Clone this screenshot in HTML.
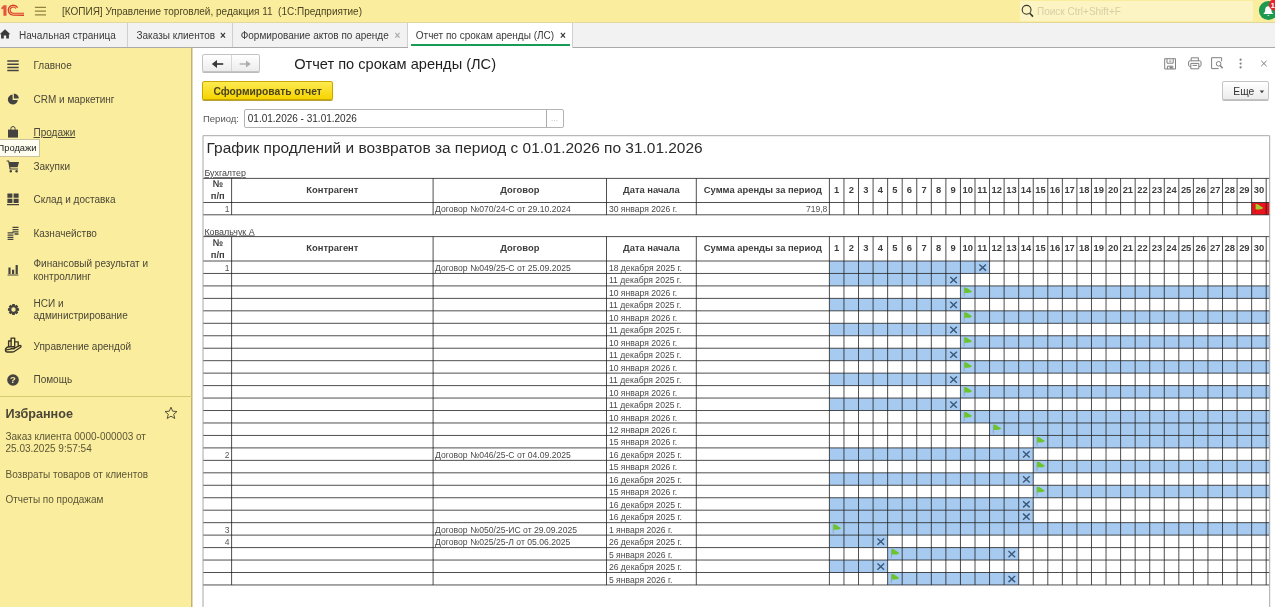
<!DOCTYPE html><html lang="ru"><head><meta charset="utf-8"><title>Отчет по срокам аренды (ЛС)</title>
<style>
html,body{margin:0;padding:0;}
body{width:1275px;height:607px;overflow:hidden;position:relative;background:#fff;font-family:"Liberation Sans",Arial,sans-serif;font-size:10px;color:#3c3c3c;}
.abs{position:absolute;white-space:nowrap;}
#topbar{left:0;top:0;width:1275px;height:23px;background:rgba(251,237,158,0.998);border-bottom:1px solid #e3d79c;box-sizing:border-box;}
#tabbar{left:0;top:23px;width:1275px;height:24px;background:rgba(242,242,242,0.998);border-bottom:1px solid #a9a9a9;box-sizing:content-box;}
#side{left:0;top:48px;width:191px;height:559px;background:rgba(251,237,158,0.998);box-sizing:border-box;}
.tab{top:23px;height:24px;line-height:25px;font-size:10px;color:#333;border-right:1px solid #cfcfcf;box-sizing:border-box;}
.mi{left:33.5px;font-size:10px;line-height:12.5px;color:#4a4737;white-space:normal;}
.fav{left:5.5px;font-size:10px;line-height:12px;color:#5b5636;}
.btn{box-sizing:border-box;border-radius:2px;}
svg{position:absolute;overflow:visible;}
svg text{font-family:"Liberation Sans",Arial,sans-serif;}
#w{position:absolute;left:0;top:0;width:1275px;height:607px;will-change:transform;}
</style></head><body><div id="w">
<div id="topbar" class="abs"></div>
<svg style="left:0;top:0" width="30" height="22" viewBox="0 0 30 22">
<path d="M1.1 7.9L3.6 5.3H6.5V15.8H3.4V8.6L1.9 9.6Z" fill="#e4553d"/>
<g fill="none" stroke="#dc3f27">
<path d="M17.6 7.7A5 5 0 1 0 13.2 15.2L24 15.2" stroke-width="1.35"/>
<path d="M15.9 8.6A3.1 3.1 0 1 0 13.2 13.2L24 13.2" stroke-width="1.05"/>
</g></svg>
<svg style="left:34px;top:4px" width="14" height="14" viewBox="0 0 14 14"><g stroke="#90833e" stroke-width="1.35"><path d="M0.9 3.35H12M0.9 7.05H12M0.9 10.8H12"/></g></svg>
<div class="abs" style="left:62px;top:4.5px;font-size:10px;line-height:13px;color:#4b4523;white-space:pre">[КОПИЯ] Управление торговлей, редакция 11  (1С:Предприятие)</div>
<div class="abs" style="left:1020px;top:1px;width:233px;height:20px;background:rgba(253,244,196,0.998);"></div>
<svg style="left:1020px;top:3px" width="16" height="16" viewBox="0 0 16 16"><circle cx="6.6" cy="6.8" r="4.4" fill="none" stroke="#3a3a2a" stroke-width="1.1"/><path d="M9.8 10.2L13 13.6" stroke="#3a3a2a" stroke-width="1.6"/></svg>
<div class="abs" style="left:1037px;top:4.5px;font-size:10px;line-height:13px;color:#d6cfa6;">Поиск Ctrl+Shift+F</div>
<svg style="left:1255px;top:0" width="20" height="22" viewBox="0 0 20 22"><circle cx="13.4" cy="10.45" r="9.5" fill="#1e9a50"/>
<path d="M13.3 6.2c-2.2 0-3.1 1.7-3.1 3.6 0 2.1-.8 3.1-2 4.2h10.2c-1.2-1.1-2-2.1-2-4.2 0-1.9-.9-3.6-3.1-3.6z M12.1 14.9a1.3 1.3 0 0 0 2.4 0z" fill="#fff"/>
<circle cx="19.6" cy="4.8" r="5.7" fill="#e6232b"/><text x="15.6" y="8" font-size="8" font-weight="bold" fill="#fff">1</text></svg>
<div id="tabbar" class="abs"></div>
<div class="abs tab" style="left:0;width:128px;"></div>
<div class="abs tab" style="left:128px;width:105px;"></div>
<div class="abs tab" style="left:233px;width:175px;"></div>
<div class="abs tab" style="left:408px;width:165px;background:rgba(255,255,255,0.998);height:25px;"></div>
<div class="abs" style="left:410.5px;top:43.6px;width:159px;height:2px;background:rgba(25,155,84,0.998);"></div>
<svg style="left:0;top:28px" width="12" height="12" viewBox="0 0 12 12"><path d="M-0.3 6.2L5 1.2L10.3 6.2H8.9V10.6H6.2V7.6H3.8V10.6H1.1V6.2Z" fill="#3a3a3a"/></svg>
<div class="abs" style="left:19px;top:28.8px;font-size:10px;line-height:13px;color:#3a3a3a;">Начальная страница</div>
<div class="abs" style="left:136.5px;top:28.8px;font-size:10px;line-height:13px;color:#3a3a3a;">Заказы клиентов</div>
<div class="abs" style="left:220px;top:28.6px;font-size:10px;line-height:13px;font-weight:bold;color:#333;">×</div>
<div class="abs" style="left:240.7px;top:28.8px;font-size:10px;line-height:13px;color:#3a3a3a;">Формирование актов по аренде</div>
<div class="abs" style="left:394.6px;top:28.6px;font-size:10px;line-height:13px;font-weight:bold;color:#aaa;">×</div>
<div class="abs" style="left:415.8px;top:28.8px;font-size:10px;line-height:13px;color:#3a3a3a;">Отчет по срокам аренды (ЛС)</div>
<div class="abs" style="left:560px;top:28.6px;font-size:10px;line-height:13px;font-weight:bold;color:#333;">×</div>
<div id="side" class="abs"></div>
<div class="abs" style="left:191px;top:47px;width:1px;height:560px;background:rgba(190,178,116,0.998);"></div>
<div class="abs" style="left:192px;top:48px;width:1px;height:559px;background:rgba(226,219,178,0.998);"></div>
<div class="abs mi" style="top:60.4px;width:150px;">Главное</div>
<div class="abs mi" style="top:94.0px;width:150px;">CRM и маркетинг</div>
<div class="abs mi" style="top:127.3px;width:150px;"><span style="text-decoration:underline">Продажи</span></div>
<div class="abs mi" style="top:160.8px;width:150px;">Закупки</div>
<div class="abs mi" style="top:194.3px;width:150px;">Склад и доставка</div>
<div class="abs mi" style="top:227.8px;width:150px;">Казначейство</div>
<div class="abs mi" style="top:258.4px;width:150px;">Финансовый результат и<br>контроллинг</div>
<div class="abs mi" style="top:297.9px;width:150px;">НСИ и<br>администрирование</div>
<div class="abs mi" style="top:341.1px;width:150px;">Управление арендой</div>
<div class="abs mi" style="top:374.4px;width:150px;">Помощь</div>
<svg style="left:7px;top:60px" width="12" height="12" viewBox="0 0 12 12"><path d="M0.3 1H11.7M0.3 4.2H11.7M0.3 7.4H11.7M0.3 10.6H11.7" stroke="#45433f" stroke-width="1.5"/></svg>
<svg style="left:7px;top:93px" width="13" height="13" viewBox="0 0 13 13"><path d="M5.6 1.6A5 5 0 1 0 10.8 7H5.6Z" fill="#45433f"/><path d="M6.9 0.6A5 5 0 0 1 11.8 5.6H6.9Z" fill="#45433f"/></svg>
<svg style="left:7px;top:125px" width="13" height="14" viewBox="0 0 13 14"><path d="M1 4.6H11V12.6H1Z" fill="#45433f"/><path d="M3.9 5V3.6A2.1 2.1 0 0 1 8.1 3.6V5" fill="none" stroke="#45433f" stroke-width="1"/></svg>
<svg style="left:6px;top:159px" width="14" height="14" viewBox="0 0 14 14"><path d="M0.6 1.4H3L3.6 3H13L11.6 8.2H4.2L4.6 9.6H12V10.6H3.6L2.2 2.6H0.6Z" fill="#45433f"/><circle cx="4.8" cy="12.2" r="1.2" fill="#45433f"/><circle cx="10.6" cy="12.2" r="1.2" fill="#45433f"/></svg>
<svg style="left:7px;top:193px" width="12" height="13" viewBox="0 0 12 13"><path d="M0.4 0.6H5.4V4.8H0.4ZM6.6 0.6H11.6V4.8H6.6ZM0.4 5.8H5.4V10H0.4ZM6.6 5.8H11.6V10H6.6ZM0 11H12V12.2H0Z" fill="#45433f"/></svg>
<svg style="left:7px;top:226px" width="13" height="14" viewBox="0 0 13 14"><g stroke="#45433f" stroke-width="1.3"><path d="M5.5 1.4H11.5M5.5 3.6H11.5M5.5 5.8H11.5M7.5 8H11.5M0.6 6.9H6.4M0.6 9.1H6.4M0.6 11.3H6.4M0.6 13.3H6.4"/></g></svg>
<svg style="left:7px;top:263px" width="12" height="13" viewBox="0 0 12 13"><path d="M0.6 11.6H11.4V12.4H0.6ZM1.4 4.4H3.6V11H1.4ZM5 6.8H7.2V11H5ZM8.6 2H10.8V11H8.6Z" fill="#45433f"/></svg>
<svg style="left:6.5px;top:302.5px" width="13" height="13" viewBox="0 0 13 13"><path d="M12.06 5.26L12.06 7.74L10.28 8.10L10.30 8.04L11.31 9.55L9.55 11.31L8.04 10.30L8.10 10.28L7.74 12.06L5.26 12.06L4.90 10.28L4.96 10.30L3.45 11.31L1.69 9.55L2.70 8.04L2.72 8.10L0.94 7.74L0.94 5.26L2.72 4.90L2.70 4.96L1.69 3.45L3.45 1.69L4.96 2.70L4.90 2.72L5.26 0.94L7.74 0.94L8.10 2.72L8.04 2.70L9.55 1.69L11.31 3.45L10.30 4.96L10.28 4.90Z M6.5 4.3A2.2 2.2 0 1 0 6.5 8.7A2.2 2.2 0 1 0 6.5 4.3Z" fill="#45433f" fill-rule="evenodd"/></svg>
<svg style="left:0;top:0" width="30" height="360" viewBox="0 0 30 360"><g fill="none" stroke="#3a3524" stroke-width="1.35" stroke-linejoin="round" stroke-linecap="round"><path d="M8.6 346.2V341H11.1V338.1H14.7V341.9H18.2V345.6"/><path d="M11.1 341V346.2M14.7 341.9V346.2"/><path d="M5.4 350.2C5.2 348 7.5 346.7 9.5 346.7H13.6C15.2 346.7 15.2 348.7 13.6 348.7H11M13.9 348.4L19.6 345.6C20.8 345.2 21.6 346.2 20.6 347.2L14.6 351.2C13.8 351.8 13 352 12 352H7C5.8 352 5.4 351.2 5.4 350.2Z"/></g></svg>
<svg style="left:7px;top:373.5px" width="12" height="12" viewBox="0 0 12 12"><circle cx="6" cy="6" r="5.8" fill="#45433f"/><text x="6" y="9.4" font-size="9.5" font-weight="bold" text-anchor="middle" fill="#fbed9e">?</text></svg>
<div class="abs" style="left:-1px;top:139px;width:41px;height:18px;background:rgba(255,254,240,0.998);border:1px solid #c9c3a0;box-sizing:border-box;"></div>
<div class="abs" style="left:-2.4px;top:142.4px;font-size:9.3px;line-height:12px;color:#222;">Продажи</div>
<div class="abs" style="left:0;top:396px;width:192px;height:1px;background:#d8c873;"></div>
<div class="abs" style="left:5.5px;top:405.5px;font-size:12.6px;line-height:16px;font-weight:bold;color:#4a4737;">Избранное</div>
<svg style="left:164px;top:406px" width="14" height="14" viewBox="0 0 14 14"><path d="M7 1.2L8.7 5.2L13 5.5L9.7 8.3L10.8 12.5L7 10.2L3.2 12.5L4.3 8.3L1 5.5L5.3 5.2Z" fill="none" stroke="#55513a" stroke-width="1"/></svg>
<div class="abs fav" style="top:430.6px;white-space:normal;width:160px;">Заказ клиента 0000-000003 от<br>25.03.2025 9:57:54</div>
<div class="abs fav" style="top:468.6px;">Возвраты товаров от клиентов</div>
<div class="abs fav" style="top:494.4px;">Отчеты по продажам</div>
<div class="abs btn" style="left:201.8px;top:54px;width:57.8px;height:18px;border:1px solid #c4c4c4;background:linear-gradient(rgba(255,255,255,0.998),rgba(236,236,236,0.998));box-shadow:0 1px 0 #bbb;"></div>
<div class="abs" style="left:231px;top:55px;width:1px;height:16px;background:#d6d6d6;"></div>
<svg style="left:211px;top:58px" width="14" height="12" viewBox="0 0 14 12"><path d="M4 6H12.2" stroke="#383838" stroke-width="1.7" fill="none"/><path d="M0.8 6L6 2V10Z" fill="#383838"/></svg>
<svg style="left:238px;top:58px" width="14" height="12" viewBox="0 0 14 12"><path d="M1.6 6H9.6" stroke="#adadad" stroke-width="1.4" fill="none"/><path d="M12.8 6L8 2.4V9.6Z" fill="#adadad"/></svg>
<div class="abs" style="left:294.2px;top:55px;font-size:14.6px;line-height:19px;color:#1e1e1e;">Отчет по срокам аренды (ЛС)</div>
<svg style="left:1164px;top:57.5px" width="13" height="12" viewBox="0 0 13 12"><g fill="none" stroke="#808080" stroke-width="1"><path d="M0.7 0.7H11.5V11H0.7Z"/><path d="M3 0.7V5.2H9.2V0.7"/><path d="M3.4 11V8.2H8.8V11"/></g><path d="M5.6 8.6H8V10.6H5.6Z" fill="#808080"/><path d="M5 2.2H7.4M5 3.6H7.4" stroke="#808080" stroke-width="0.6"/></svg>
<svg style="left:1188px;top:57px" width="14" height="13" viewBox="0 0 14 13"><g fill="none" stroke="#808080" stroke-width="1"><path d="M3.2 3.8V0.8H10.4V3.8"/><path d="M2.8 9.4H1.6C1 9.4 0.6 9 0.6 8.4V5C0.6 4.2 1.2 3.8 1.8 3.8H11.8C12.6 3.8 13 4.4 13 5V8.4C13 9 12.6 9.4 12 9.4H10.8"/><path d="M2.8 6.4H10.8V11.8H2.8Z"/><path d="M4.6 8.4H9"/></g></svg>
<svg style="left:1211px;top:57px" width="13" height="13" viewBox="0 0 13 13"><g fill="none" stroke="#808080" stroke-width="1"><path d="M7.6 11.6H0.6V0.7H10.6V4.4"/><circle cx="7.6" cy="6.8" r="2.3"/><path d="M9.2 8.6L11.6 11.2" stroke-width="1.5"/></g></svg>
<svg style="left:1238px;top:57px" width="6" height="13" viewBox="0 0 6 13"><circle cx="2.6" cy="2.7" r="1.1" fill="#808080"/><circle cx="2.6" cy="6.6" r="1.1" fill="#808080"/><circle cx="2.6" cy="10.4" r="1.1" fill="#808080"/></svg>
<svg style="left:1260px;top:60px" width="8" height="8" viewBox="0 0 8 8"><path d="M1.2 0.8L6.6 6.2M6.6 0.8L1.2 6.2" stroke="#777" stroke-width="1"/></svg>
<div class="abs btn" style="left:202px;top:81px;width:130.8px;height:19px;border:1px solid #c8a800;background:linear-gradient(rgba(253,234,80,0.998),rgba(246,212,0,0.998));box-shadow:0 1px 0 #b8a030;"></div>
<div class="abs" style="left:213.4px;top:84.5px;font-size:10.25px;line-height:13px;font-weight:bold;color:#4a431c;">Сформировать отчет</div>
<div class="abs btn" style="left:1221.6px;top:80.8px;width:47.8px;height:19.4px;border:1px solid #c4c4c4;background:linear-gradient(rgba(255,255,255,0.998),rgba(236,236,236,0.998));box-shadow:0 1px 0 #bbb;"></div>
<div class="abs" style="left:1233.3px;top:84.5px;font-size:10.3px;line-height:13px;color:#333;">Еще</div>
<svg style="left:1259px;top:89.5px" width="6" height="4" viewBox="0 0 6 4"><path d="M0.6 0.6H5.2L2.9 3.2Z" fill="#444"/></svg>
<div class="abs" style="left:203px;top:112px;font-size:9.5px;line-height:13px;color:#555;">Период:</div>
<div class="abs" style="left:243.9px;top:109.3px;width:320px;height:19px;border:1px solid #b4b4b4;box-sizing:border-box;background:rgba(255,255,255,0.998);border-radius:2px;"></div>
<div class="abs" style="left:546px;top:110.3px;width:1px;height:17px;background:#ababab;"></div>
<div class="abs" style="left:551px;top:111.9px;font-size:8px;line-height:13px;color:#b0b0b0;letter-spacing:0.2px;">...</div>
<div class="abs" style="left:247.8px;top:112px;font-size:10px;line-height:13px;color:#2d2d2d;">01.01.2026 - 31.01.2026</div>
<svg style="left:0;top:0" width="1275" height="607" viewBox="0 0 1275 607">
<defs><clipPath id="rc"><rect x="203.0" y="135.7" width="1066.7" height="476.3"/></clipPath></defs>
<g clip-path="url(#rc)">
<rect x="1251.64" y="202.50" width="28.36" height="12.30" fill="#e9141d"/>
<path d="M203.0 178.40H1275M203.0 202.50H1275M203.0 214.80H1275M231.60 178.40V214.80M433.10 178.40V214.80M606.50 178.40V214.80M696.30 178.40V214.80M829.40 178.40V214.80M843.96 178.40V214.80M858.52 178.40V214.80M873.08 178.40V214.80M887.64 178.40V214.80M902.20 178.40V214.80M916.76 178.40V214.80M931.32 178.40V214.80M945.88 178.40V214.80M960.44 178.40V214.80M975.00 178.40V214.80M989.56 178.40V214.80M1004.12 178.40V214.80M1018.68 178.40V214.80M1033.24 178.40V214.80M1047.80 178.40V214.80M1062.36 178.40V214.80M1076.92 178.40V214.80M1091.48 178.40V214.80M1106.04 178.40V214.80M1120.60 178.40V214.80M1135.16 178.40V214.80M1149.72 178.40V214.80M1164.28 178.40V214.80M1178.84 178.40V214.80M1193.40 178.40V214.80M1207.96 178.40V214.80M1222.52 178.40V214.80M1237.08 178.40V214.80M1251.64 178.40V214.80M1266.20 178.40V214.80M1280.76 178.40V214.80" stroke="#1c1c1c" stroke-width="0.78" fill="none"/>
<text x="217.80" y="187.35" font-size="9.4" font-weight="bold" fill="#3d3d3d" text-anchor="middle">№</text>
<text x="217.80" y="199.25" font-size="9.4" font-weight="bold" fill="#3d3d3d" text-anchor="middle">п/п</text>
<text x="332.35" y="193.05" font-size="9.4" font-weight="bold" fill="#3d3d3d" text-anchor="middle">Контрагент</text>
<text x="519.80" y="193.05" font-size="9.4" font-weight="bold" fill="#3d3d3d" text-anchor="middle">Договор</text>
<text x="651.40" y="193.05" font-size="9.4" font-weight="bold" fill="#3d3d3d" text-anchor="middle">Дата начала</text>
<text x="762.85" y="193.05" font-size="9.4" font-weight="bold" fill="#3d3d3d" text-anchor="middle">Сумма аренды за период</text>
<text x="836.68" y="193.05" font-size="9.4" font-weight="bold" fill="#3d3d3d" text-anchor="middle">1</text>
<text x="851.24" y="193.05" font-size="9.4" font-weight="bold" fill="#3d3d3d" text-anchor="middle">2</text>
<text x="865.80" y="193.05" font-size="9.4" font-weight="bold" fill="#3d3d3d" text-anchor="middle">3</text>
<text x="880.36" y="193.05" font-size="9.4" font-weight="bold" fill="#3d3d3d" text-anchor="middle">4</text>
<text x="894.92" y="193.05" font-size="9.4" font-weight="bold" fill="#3d3d3d" text-anchor="middle">5</text>
<text x="909.48" y="193.05" font-size="9.4" font-weight="bold" fill="#3d3d3d" text-anchor="middle">6</text>
<text x="924.04" y="193.05" font-size="9.4" font-weight="bold" fill="#3d3d3d" text-anchor="middle">7</text>
<text x="938.60" y="193.05" font-size="9.4" font-weight="bold" fill="#3d3d3d" text-anchor="middle">8</text>
<text x="953.16" y="193.05" font-size="9.4" font-weight="bold" fill="#3d3d3d" text-anchor="middle">9</text>
<text x="967.72" y="193.05" font-size="9.4" font-weight="bold" fill="#3d3d3d" text-anchor="middle">10</text>
<text x="982.28" y="193.05" font-size="9.4" font-weight="bold" fill="#3d3d3d" text-anchor="middle">11</text>
<text x="996.84" y="193.05" font-size="9.4" font-weight="bold" fill="#3d3d3d" text-anchor="middle">12</text>
<text x="1011.40" y="193.05" font-size="9.4" font-weight="bold" fill="#3d3d3d" text-anchor="middle">13</text>
<text x="1025.96" y="193.05" font-size="9.4" font-weight="bold" fill="#3d3d3d" text-anchor="middle">14</text>
<text x="1040.52" y="193.05" font-size="9.4" font-weight="bold" fill="#3d3d3d" text-anchor="middle">15</text>
<text x="1055.08" y="193.05" font-size="9.4" font-weight="bold" fill="#3d3d3d" text-anchor="middle">16</text>
<text x="1069.64" y="193.05" font-size="9.4" font-weight="bold" fill="#3d3d3d" text-anchor="middle">17</text>
<text x="1084.20" y="193.05" font-size="9.4" font-weight="bold" fill="#3d3d3d" text-anchor="middle">18</text>
<text x="1098.76" y="193.05" font-size="9.4" font-weight="bold" fill="#3d3d3d" text-anchor="middle">19</text>
<text x="1113.32" y="193.05" font-size="9.4" font-weight="bold" fill="#3d3d3d" text-anchor="middle">20</text>
<text x="1127.88" y="193.05" font-size="9.4" font-weight="bold" fill="#3d3d3d" text-anchor="middle">21</text>
<text x="1142.44" y="193.05" font-size="9.4" font-weight="bold" fill="#3d3d3d" text-anchor="middle">22</text>
<text x="1157.00" y="193.05" font-size="9.4" font-weight="bold" fill="#3d3d3d" text-anchor="middle">23</text>
<text x="1171.56" y="193.05" font-size="9.4" font-weight="bold" fill="#3d3d3d" text-anchor="middle">24</text>
<text x="1186.12" y="193.05" font-size="9.4" font-weight="bold" fill="#3d3d3d" text-anchor="middle">25</text>
<text x="1200.68" y="193.05" font-size="9.4" font-weight="bold" fill="#3d3d3d" text-anchor="middle">26</text>
<text x="1215.24" y="193.05" font-size="9.4" font-weight="bold" fill="#3d3d3d" text-anchor="middle">27</text>
<text x="1229.80" y="193.05" font-size="9.4" font-weight="bold" fill="#3d3d3d" text-anchor="middle">28</text>
<text x="1244.36" y="193.05" font-size="9.4" font-weight="bold" fill="#3d3d3d" text-anchor="middle">29</text>
<text x="1258.92" y="193.05" font-size="9.4" font-weight="bold" fill="#3d3d3d" text-anchor="middle">30</text>
<text x="229.60" y="212.45" font-size="8.5" fill="#555" text-anchor="end">1</text>
<text x="435.10" y="212.45" font-size="8.6" fill="#4a4a4a">Договор №070/24-С от 29.10.2024</text>
<text x="608.90" y="212.45" font-size="8.6" fill="#4a4a4a">30 января 2026 г.</text>
<text x="827.40" y="212.45" font-size="8.6" fill="#555" text-anchor="end">719,8</text>
<path d="M1255.44 204.25V212.85" stroke="#c01018" stroke-width="0.8" fill="none"/>
<path d="M1255.54 203.95C1258.04 203.65 1259.84 206.05 1263.24 207.75C1261.24 210.25 1258.04 209.05 1255.54 209.55Z" fill="#9fcf28"/>
<rect x="829.40" y="261.00" width="160.16" height="12.46" fill="#a6caf0"/>
<rect x="829.40" y="273.46" width="131.04" height="12.46" fill="#a6caf0"/>
<rect x="960.44" y="285.92" width="319.56" height="12.46" fill="#a6caf0"/>
<rect x="829.40" y="298.38" width="131.04" height="12.46" fill="#a6caf0"/>
<rect x="960.44" y="310.84" width="319.56" height="12.46" fill="#a6caf0"/>
<rect x="829.40" y="323.30" width="131.04" height="12.46" fill="#a6caf0"/>
<rect x="960.44" y="335.76" width="319.56" height="12.46" fill="#a6caf0"/>
<rect x="829.40" y="348.22" width="131.04" height="12.46" fill="#a6caf0"/>
<rect x="960.44" y="360.68" width="319.56" height="12.46" fill="#a6caf0"/>
<rect x="829.40" y="373.14" width="131.04" height="12.46" fill="#a6caf0"/>
<rect x="960.44" y="385.60" width="319.56" height="12.46" fill="#a6caf0"/>
<rect x="829.40" y="398.06" width="131.04" height="12.46" fill="#a6caf0"/>
<rect x="960.44" y="410.52" width="319.56" height="12.46" fill="#a6caf0"/>
<rect x="989.56" y="422.98" width="290.44" height="12.46" fill="#a6caf0"/>
<rect x="1033.24" y="435.44" width="246.76" height="12.46" fill="#a6caf0"/>
<rect x="829.40" y="447.90" width="203.84" height="12.46" fill="#a6caf0"/>
<rect x="1033.24" y="460.36" width="246.76" height="12.46" fill="#a6caf0"/>
<rect x="829.40" y="472.82" width="203.84" height="12.46" fill="#a6caf0"/>
<rect x="1033.24" y="485.28" width="246.76" height="12.46" fill="#a6caf0"/>
<rect x="829.40" y="497.74" width="203.84" height="12.46" fill="#a6caf0"/>
<rect x="829.40" y="510.20" width="203.84" height="12.46" fill="#a6caf0"/>
<rect x="829.40" y="522.66" width="450.60" height="12.46" fill="#a6caf0"/>
<rect x="829.40" y="535.12" width="58.24" height="12.46" fill="#a6caf0"/>
<rect x="887.64" y="547.58" width="131.04" height="12.46" fill="#a6caf0"/>
<rect x="829.40" y="560.04" width="58.24" height="12.46" fill="#a6caf0"/>
<rect x="887.64" y="572.50" width="131.04" height="12.46" fill="#a6caf0"/>
<path d="M203.0 236.60H1275M203.0 261.00H1275M203.0 273.46H1275M203.0 285.92H1275M203.0 298.38H1275M203.0 310.84H1275M203.0 323.30H1275M203.0 335.76H1275M203.0 348.22H1275M203.0 360.68H1275M203.0 373.14H1275M203.0 385.60H1275M203.0 398.06H1275M203.0 410.52H1275M203.0 422.98H1275M203.0 435.44H1275M203.0 447.90H1275M203.0 460.36H1275M203.0 472.82H1275M203.0 485.28H1275M203.0 497.74H1275M203.0 510.20H1275M203.0 522.66H1275M203.0 535.12H1275M203.0 547.58H1275M203.0 560.04H1275M203.0 572.50H1275M203.0 584.96H1275M231.60 236.60V584.96M433.10 236.60V584.96M606.50 236.60V584.96M696.30 236.60V584.96M829.40 236.60V584.96M843.96 236.60V584.96M858.52 236.60V584.96M873.08 236.60V584.96M887.64 236.60V584.96M902.20 236.60V584.96M916.76 236.60V584.96M931.32 236.60V584.96M945.88 236.60V584.96M960.44 236.60V584.96M975.00 236.60V584.96M989.56 236.60V584.96M1004.12 236.60V584.96M1018.68 236.60V584.96M1033.24 236.60V584.96M1047.80 236.60V584.96M1062.36 236.60V584.96M1076.92 236.60V584.96M1091.48 236.60V584.96M1106.04 236.60V584.96M1120.60 236.60V584.96M1135.16 236.60V584.96M1149.72 236.60V584.96M1164.28 236.60V584.96M1178.84 236.60V584.96M1193.40 236.60V584.96M1207.96 236.60V584.96M1222.52 236.60V584.96M1237.08 236.60V584.96M1251.64 236.60V584.96M1266.20 236.60V584.96M1280.76 236.60V584.96" stroke="#1c1c1c" stroke-width="0.78" fill="none"/>
<text x="217.80" y="245.70" font-size="9.4" font-weight="bold" fill="#3d3d3d" text-anchor="middle">№</text>
<text x="217.80" y="257.60" font-size="9.4" font-weight="bold" fill="#3d3d3d" text-anchor="middle">п/п</text>
<text x="332.35" y="251.40" font-size="9.4" font-weight="bold" fill="#3d3d3d" text-anchor="middle">Контрагент</text>
<text x="519.80" y="251.40" font-size="9.4" font-weight="bold" fill="#3d3d3d" text-anchor="middle">Договор</text>
<text x="651.40" y="251.40" font-size="9.4" font-weight="bold" fill="#3d3d3d" text-anchor="middle">Дата начала</text>
<text x="762.85" y="251.40" font-size="9.4" font-weight="bold" fill="#3d3d3d" text-anchor="middle">Сумма аренды за период</text>
<text x="836.68" y="251.40" font-size="9.4" font-weight="bold" fill="#3d3d3d" text-anchor="middle">1</text>
<text x="851.24" y="251.40" font-size="9.4" font-weight="bold" fill="#3d3d3d" text-anchor="middle">2</text>
<text x="865.80" y="251.40" font-size="9.4" font-weight="bold" fill="#3d3d3d" text-anchor="middle">3</text>
<text x="880.36" y="251.40" font-size="9.4" font-weight="bold" fill="#3d3d3d" text-anchor="middle">4</text>
<text x="894.92" y="251.40" font-size="9.4" font-weight="bold" fill="#3d3d3d" text-anchor="middle">5</text>
<text x="909.48" y="251.40" font-size="9.4" font-weight="bold" fill="#3d3d3d" text-anchor="middle">6</text>
<text x="924.04" y="251.40" font-size="9.4" font-weight="bold" fill="#3d3d3d" text-anchor="middle">7</text>
<text x="938.60" y="251.40" font-size="9.4" font-weight="bold" fill="#3d3d3d" text-anchor="middle">8</text>
<text x="953.16" y="251.40" font-size="9.4" font-weight="bold" fill="#3d3d3d" text-anchor="middle">9</text>
<text x="967.72" y="251.40" font-size="9.4" font-weight="bold" fill="#3d3d3d" text-anchor="middle">10</text>
<text x="982.28" y="251.40" font-size="9.4" font-weight="bold" fill="#3d3d3d" text-anchor="middle">11</text>
<text x="996.84" y="251.40" font-size="9.4" font-weight="bold" fill="#3d3d3d" text-anchor="middle">12</text>
<text x="1011.40" y="251.40" font-size="9.4" font-weight="bold" fill="#3d3d3d" text-anchor="middle">13</text>
<text x="1025.96" y="251.40" font-size="9.4" font-weight="bold" fill="#3d3d3d" text-anchor="middle">14</text>
<text x="1040.52" y="251.40" font-size="9.4" font-weight="bold" fill="#3d3d3d" text-anchor="middle">15</text>
<text x="1055.08" y="251.40" font-size="9.4" font-weight="bold" fill="#3d3d3d" text-anchor="middle">16</text>
<text x="1069.64" y="251.40" font-size="9.4" font-weight="bold" fill="#3d3d3d" text-anchor="middle">17</text>
<text x="1084.20" y="251.40" font-size="9.4" font-weight="bold" fill="#3d3d3d" text-anchor="middle">18</text>
<text x="1098.76" y="251.40" font-size="9.4" font-weight="bold" fill="#3d3d3d" text-anchor="middle">19</text>
<text x="1113.32" y="251.40" font-size="9.4" font-weight="bold" fill="#3d3d3d" text-anchor="middle">20</text>
<text x="1127.88" y="251.40" font-size="9.4" font-weight="bold" fill="#3d3d3d" text-anchor="middle">21</text>
<text x="1142.44" y="251.40" font-size="9.4" font-weight="bold" fill="#3d3d3d" text-anchor="middle">22</text>
<text x="1157.00" y="251.40" font-size="9.4" font-weight="bold" fill="#3d3d3d" text-anchor="middle">23</text>
<text x="1171.56" y="251.40" font-size="9.4" font-weight="bold" fill="#3d3d3d" text-anchor="middle">24</text>
<text x="1186.12" y="251.40" font-size="9.4" font-weight="bold" fill="#3d3d3d" text-anchor="middle">25</text>
<text x="1200.68" y="251.40" font-size="9.4" font-weight="bold" fill="#3d3d3d" text-anchor="middle">26</text>
<text x="1215.24" y="251.40" font-size="9.4" font-weight="bold" fill="#3d3d3d" text-anchor="middle">27</text>
<text x="1229.80" y="251.40" font-size="9.4" font-weight="bold" fill="#3d3d3d" text-anchor="middle">28</text>
<text x="1244.36" y="251.40" font-size="9.4" font-weight="bold" fill="#3d3d3d" text-anchor="middle">29</text>
<text x="1258.92" y="251.40" font-size="9.4" font-weight="bold" fill="#3d3d3d" text-anchor="middle">30</text>
<text x="229.60" y="271.03" font-size="8.5" fill="#555" text-anchor="end">1</text>
<text x="435.10" y="271.03" font-size="8.6" fill="#4a4a4a">Договор №049/25-С от 25.09.2025</text>
<text x="608.90" y="271.03" font-size="8.6" fill="#4a4a4a">18 декабря 2025 г.</text>
<text x="608.90" y="283.49" font-size="8.6" fill="#4a4a4a">11 декабря 2025 г.</text>
<text x="608.90" y="295.95" font-size="8.6" fill="#4a4a4a">10 января 2026 г.</text>
<text x="608.90" y="308.41" font-size="8.6" fill="#4a4a4a">11 декабря 2025 г.</text>
<text x="608.90" y="320.87" font-size="8.6" fill="#4a4a4a">10 января 2026 г.</text>
<text x="608.90" y="333.33" font-size="8.6" fill="#4a4a4a">11 декабря 2025 г.</text>
<text x="608.90" y="345.79" font-size="8.6" fill="#4a4a4a">10 января 2026 г.</text>
<text x="608.90" y="358.25" font-size="8.6" fill="#4a4a4a">11 декабря 2025 г.</text>
<text x="608.90" y="370.71" font-size="8.6" fill="#4a4a4a">10 января 2026 г.</text>
<text x="608.90" y="383.17" font-size="8.6" fill="#4a4a4a">11 декабря 2025 г.</text>
<text x="608.90" y="395.63" font-size="8.6" fill="#4a4a4a">10 января 2026 г.</text>
<text x="608.90" y="408.09" font-size="8.6" fill="#4a4a4a">11 декабря 2025 г.</text>
<text x="608.90" y="420.55" font-size="8.6" fill="#4a4a4a">10 января 2026 г.</text>
<text x="608.90" y="433.01" font-size="8.6" fill="#4a4a4a">12 января 2026 г.</text>
<text x="608.90" y="445.47" font-size="8.6" fill="#4a4a4a">15 января 2026 г.</text>
<text x="229.60" y="457.93" font-size="8.5" fill="#555" text-anchor="end">2</text>
<text x="435.10" y="457.93" font-size="8.6" fill="#4a4a4a">Договор №046/25-С от 04.09.2025</text>
<text x="608.90" y="457.93" font-size="8.6" fill="#4a4a4a">16 декабря 2025 г.</text>
<text x="608.90" y="470.39" font-size="8.6" fill="#4a4a4a">15 января 2026 г.</text>
<text x="608.90" y="482.85" font-size="8.6" fill="#4a4a4a">16 декабря 2025 г.</text>
<text x="608.90" y="495.31" font-size="8.6" fill="#4a4a4a">15 января 2026 г.</text>
<text x="608.90" y="507.77" font-size="8.6" fill="#4a4a4a">16 декабря 2025 г.</text>
<text x="608.90" y="520.23" font-size="8.6" fill="#4a4a4a">16 декабря 2025 г.</text>
<text x="229.60" y="532.69" font-size="8.5" fill="#555" text-anchor="end">3</text>
<text x="435.10" y="532.69" font-size="8.6" fill="#4a4a4a">Договор №050/25-ИС от 29.09.2025</text>
<text x="608.90" y="532.69" font-size="8.6" fill="#4a4a4a">1 января 2026 г.</text>
<text x="229.60" y="545.15" font-size="8.5" fill="#555" text-anchor="end">4</text>
<text x="435.10" y="545.15" font-size="8.6" fill="#4a4a4a">Договор №025/25-Л от 05.06.2025</text>
<text x="608.90" y="545.15" font-size="8.6" fill="#4a4a4a">26 декабря 2025 г.</text>
<text x="608.90" y="557.61" font-size="8.6" fill="#4a4a4a">5 января 2026 г.</text>
<text x="608.90" y="570.07" font-size="8.6" fill="#4a4a4a">26 декабря 2025 г.</text>
<text x="608.90" y="582.53" font-size="8.6" fill="#4a4a4a">5 января 2026 г.</text>
<path d="M979.38 264.43L985.98 270.63M985.98 264.43L979.38 270.63" stroke="#3a5878" stroke-width="1.4" fill="none"/>
<path d="M950.26 276.89L956.86 283.09M956.86 276.89L950.26 283.09" stroke="#3a5878" stroke-width="1.4" fill="none"/>
<path d="M964.24 287.75V296.35" stroke="#8e9fb2" stroke-width="0.8" fill="none"/>
<path d="M964.34 287.45C966.84 287.15 968.64 289.55 972.04 291.25C970.04 293.75 966.84 292.55 964.34 293.05Z" fill="#6cc42c"/>
<path d="M950.26 301.81L956.86 308.01M956.86 301.81L950.26 308.01" stroke="#3a5878" stroke-width="1.4" fill="none"/>
<path d="M964.24 312.67V321.27" stroke="#8e9fb2" stroke-width="0.8" fill="none"/>
<path d="M964.34 312.37C966.84 312.07 968.64 314.47 972.04 316.17C970.04 318.67 966.84 317.47 964.34 317.97Z" fill="#6cc42c"/>
<path d="M950.26 326.73L956.86 332.93M956.86 326.73L950.26 332.93" stroke="#3a5878" stroke-width="1.4" fill="none"/>
<path d="M964.24 337.59V346.19" stroke="#8e9fb2" stroke-width="0.8" fill="none"/>
<path d="M964.34 337.29C966.84 336.99 968.64 339.39 972.04 341.09C970.04 343.59 966.84 342.39 964.34 342.89Z" fill="#6cc42c"/>
<path d="M950.26 351.65L956.86 357.85M956.86 351.65L950.26 357.85" stroke="#3a5878" stroke-width="1.4" fill="none"/>
<path d="M964.24 362.51V371.11" stroke="#8e9fb2" stroke-width="0.8" fill="none"/>
<path d="M964.34 362.21C966.84 361.91 968.64 364.31 972.04 366.01C970.04 368.51 966.84 367.31 964.34 367.81Z" fill="#6cc42c"/>
<path d="M950.26 376.57L956.86 382.77M956.86 376.57L950.26 382.77" stroke="#3a5878" stroke-width="1.4" fill="none"/>
<path d="M964.24 387.43V396.03" stroke="#8e9fb2" stroke-width="0.8" fill="none"/>
<path d="M964.34 387.13C966.84 386.83 968.64 389.23 972.04 390.93C970.04 393.43 966.84 392.23 964.34 392.73Z" fill="#6cc42c"/>
<path d="M950.26 401.49L956.86 407.69M956.86 401.49L950.26 407.69" stroke="#3a5878" stroke-width="1.4" fill="none"/>
<path d="M964.24 412.35V420.95" stroke="#8e9fb2" stroke-width="0.8" fill="none"/>
<path d="M964.34 412.05C966.84 411.75 968.64 414.15 972.04 415.85C970.04 418.35 966.84 417.15 964.34 417.65Z" fill="#6cc42c"/>
<path d="M993.36 424.81V433.41" stroke="#8e9fb2" stroke-width="0.8" fill="none"/>
<path d="M993.46 424.51C995.96 424.21 997.76 426.61 1001.16 428.31C999.16 430.81 995.96 429.61 993.46 430.11Z" fill="#6cc42c"/>
<path d="M1037.04 437.27V445.87" stroke="#8e9fb2" stroke-width="0.8" fill="none"/>
<path d="M1037.14 436.97C1039.64 436.67 1041.44 439.07 1044.84 440.77C1042.84 443.27 1039.64 442.07 1037.14 442.57Z" fill="#6cc42c"/>
<path d="M1023.06 451.33L1029.66 457.53M1029.66 451.33L1023.06 457.53" stroke="#3a5878" stroke-width="1.4" fill="none"/>
<path d="M1037.04 462.19V470.79" stroke="#8e9fb2" stroke-width="0.8" fill="none"/>
<path d="M1037.14 461.89C1039.64 461.59 1041.44 463.99 1044.84 465.69C1042.84 468.19 1039.64 466.99 1037.14 467.49Z" fill="#6cc42c"/>
<path d="M1023.06 476.25L1029.66 482.45M1029.66 476.25L1023.06 482.45" stroke="#3a5878" stroke-width="1.4" fill="none"/>
<path d="M1037.04 487.11V495.71" stroke="#8e9fb2" stroke-width="0.8" fill="none"/>
<path d="M1037.14 486.81C1039.64 486.51 1041.44 488.91 1044.84 490.61C1042.84 493.11 1039.64 491.91 1037.14 492.41Z" fill="#6cc42c"/>
<path d="M1023.06 501.17L1029.66 507.37M1029.66 501.17L1023.06 507.37" stroke="#3a5878" stroke-width="1.4" fill="none"/>
<path d="M1023.06 513.63L1029.66 519.83M1029.66 513.63L1023.06 519.83" stroke="#3a5878" stroke-width="1.4" fill="none"/>
<path d="M833.20 524.49V533.09" stroke="#8e9fb2" stroke-width="0.8" fill="none"/>
<path d="M833.30 524.19C835.80 523.89 837.60 526.29 841.00 527.99C839.00 530.49 835.80 529.29 833.30 529.79Z" fill="#6cc42c"/>
<path d="M877.46 538.55L884.06 544.75M884.06 538.55L877.46 544.75" stroke="#3a5878" stroke-width="1.4" fill="none"/>
<path d="M891.44 549.41V558.01" stroke="#8e9fb2" stroke-width="0.8" fill="none"/>
<path d="M891.54 549.11C894.04 548.81 895.84 551.21 899.24 552.91C897.24 555.41 894.04 554.21 891.54 554.71Z" fill="#6cc42c"/>
<path d="M1008.50 551.01L1015.10 557.21M1015.10 551.01L1008.50 557.21" stroke="#3a5878" stroke-width="1.4" fill="none"/>
<path d="M877.46 563.47L884.06 569.67M884.06 563.47L877.46 569.67" stroke="#3a5878" stroke-width="1.4" fill="none"/>
<path d="M891.44 574.33V582.93" stroke="#8e9fb2" stroke-width="0.8" fill="none"/>
<path d="M891.54 574.03C894.04 573.73 895.84 576.13 899.24 577.83C897.24 580.33 894.04 579.13 891.54 579.63Z" fill="#6cc42c"/>
<path d="M1008.50 575.93L1015.10 582.13M1015.10 575.93L1008.50 582.13" stroke="#3a5878" stroke-width="1.4" fill="none"/>
</g>
<path d="M203.0 607V135.7H1269.7V607" stroke="#a8a8a8" stroke-width="1" fill="none"/>
<text x="206.6" y="152.5" font-size="15.45" fill="#2a2a2a">График продлений и возвратов за период с 01.01.2026 по 31.01.2026</text>
<text x="204.4" y="176.3" font-size="8.9" fill="#444" text-decoration="underline">Бухгалтер</text>
<text x="204.4" y="234.5" font-size="8.9" fill="#444" text-decoration="underline">Ковальчук А</text>
</svg>
</div></body></html>
